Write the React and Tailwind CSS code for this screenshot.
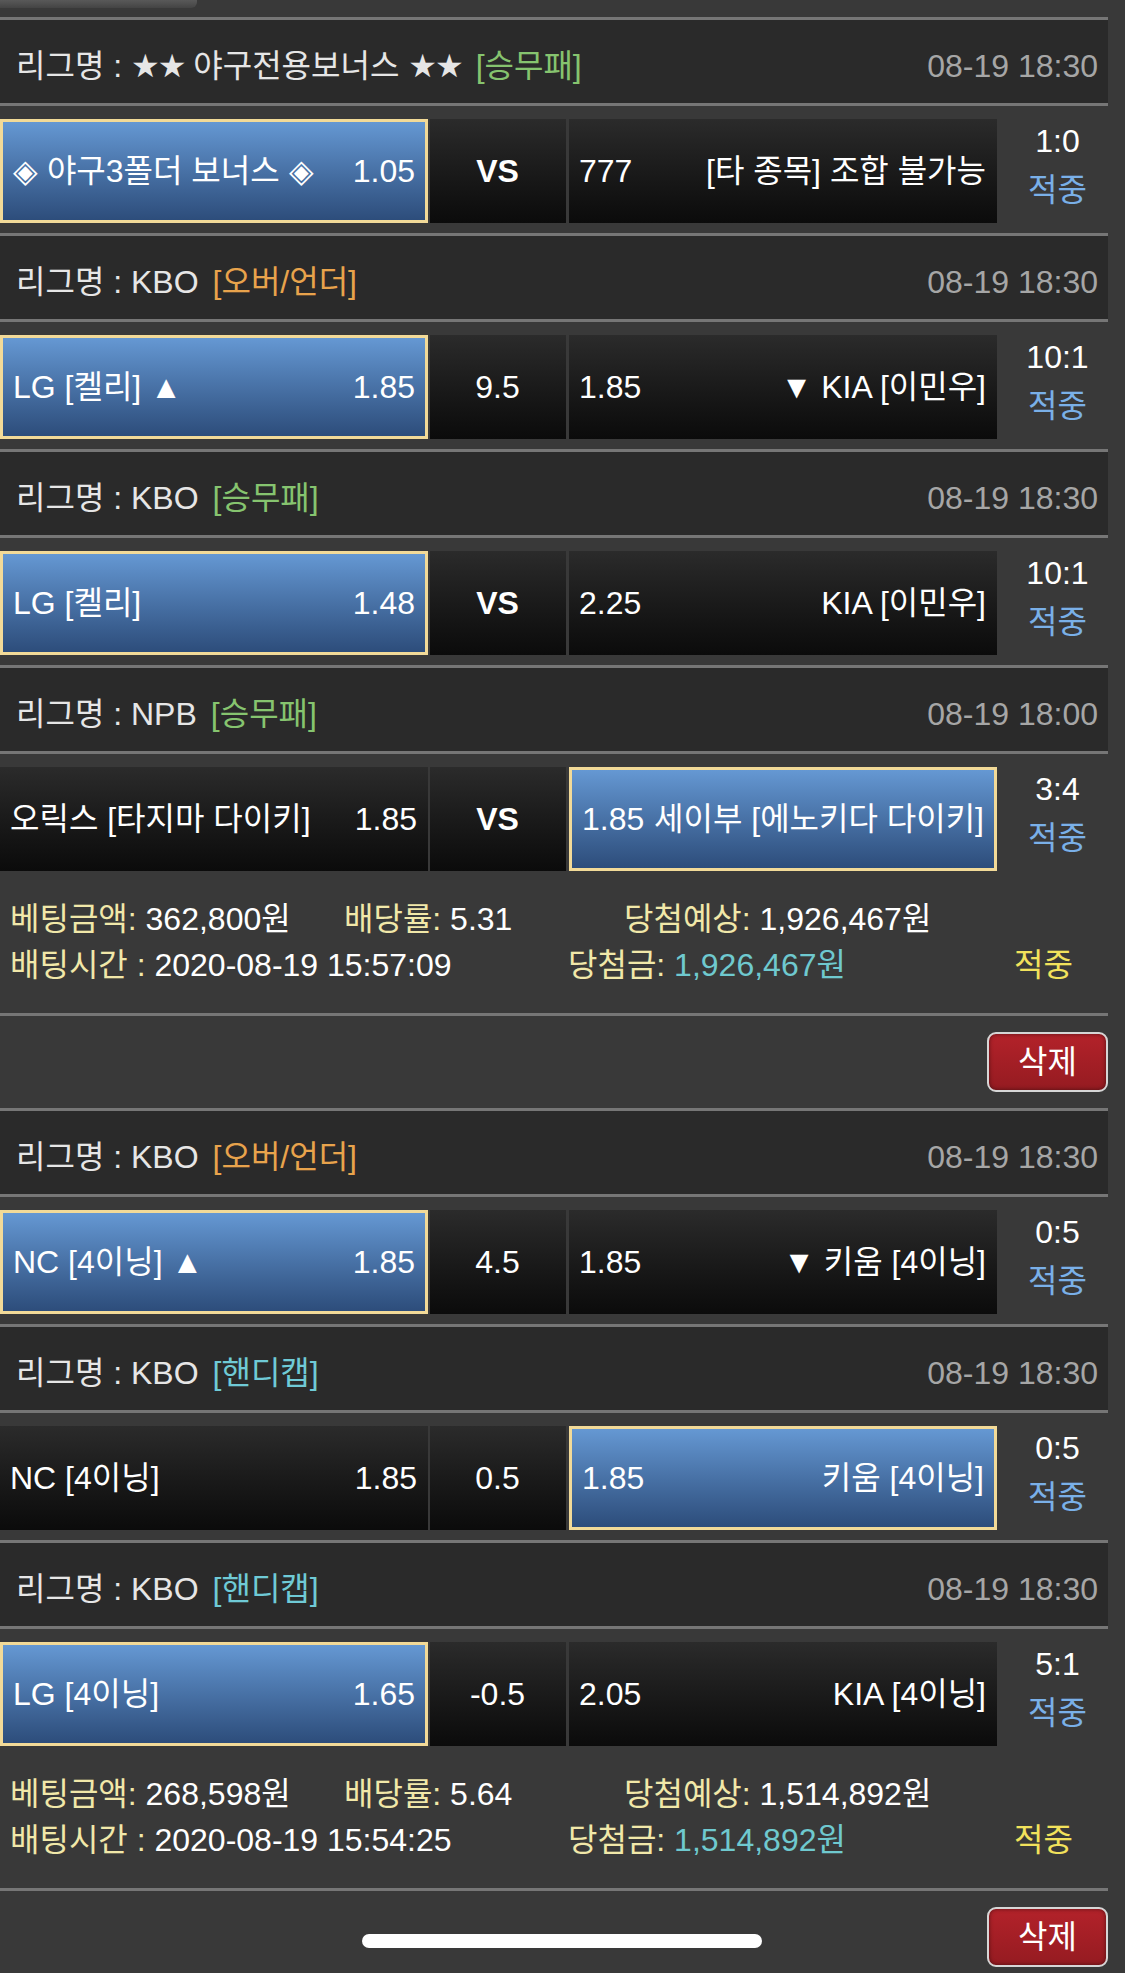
import React from "react";

const tagColor = {
  green: "text-[#86c46f]",
  orange: "text-[#e8a34c]",
  cyan: "text-[#6fcad6]",
};

function Cell({ blue, w, left, right, center, bold, extra = "" }) {
  const base = blue
    ? "bg-gradient-to-b from-[#6598d3] to-[#2d4d7b] border-[3px] border-[#f2da98]"
    : "bg-gradient-to-b from-[#2b2b2b] to-[#0b0b0b]";
  return (
    <div className={`${w} h-[104px] flex items-center ${base} ${extra} ${center ? "justify-center" : "justify-between"} ${blue ? "pl-[10px] pr-[10px]" : "pl-[10px] pr-[11px]"}`}>
      {center ? (
        <span className={bold ? "font-bold" : ""}>{center}</span>
      ) : (
        <>
          <span className="whitespace-pre">{left}</span>
          <span className="whitespace-pre">{right}</span>
        </>
      )}
    </div>
  );
}

const Stars = () => <span className="font-['DejaVu_Sans',sans-serif] text-[32px] tracking-[-2px]">★★</span>;

function Block({ league, tag, tagC, time, L, M, R, score, lb, rb }) {
  return (
    <>
      <div className="h-[86px] border-t-[3px] border-[#767676] bg-[#2a2a2a] flex items-center justify-between pl-[16px] pr-[10px] pt-[8px]">
        <div className="text-[#e6e6e6] whitespace-pre">
          리그명 : {league === "BONUS" ? (<><Stars /> 야구전용보너스 <Stars /></>) : league}
          <span className={`ml-[14px] ${tagColor[tagC]}`}>{tag}</span>
        </div>
        <div className="text-[#a6a6a6]">{time}</div>
      </div>
      <div className="h-[130px] border-t-[3px] border-[#767676] pt-[13px] flex text-white">
        <Cell blue={lb} w="w-[428px]" left={L[0]} right={L[1]} />
        <Cell w="w-[136px]" extra="ml-[2px]" center={M} bold={M === "VS"} />
        <Cell blue={rb} w="w-[428px]" extra="ml-[3px]" left={R[0]} right={R[1]} />
        <div className="w-[111px] pl-[10px] flex flex-col items-center gap-[9px] mt-[2px] leading-[40px]">
          <span className="text-white">{score}</span>
          <span className="text-[#7ab0e8]">적중</span>
        </div>
      </div>
    </>
  );
}

function Summary({ amount, odds, expect, time, win }) {
  return (
    <div className="h-[132px] pt-[15px] leading-[46px] whitespace-pre">
      <div className="flex pl-[10px]">
        <span className="w-[334px]">
          <span className="text-[#f1e8a9]">베팅금액: </span>
          <span className="text-white">{amount}</span>
        </span>
        <span className="w-[280px]">
          <span className="text-[#f1e8a9]">배당률: </span>
          <span className="text-white">{odds}</span>
        </span>
        <span>
          <span className="text-[#f1e8a9]">당첨예상: </span>
          <span className="text-white">{expect}</span>
        </span>
      </div>
      <div className="flex pl-[10px]">
        <span className="w-[558px]">
          <span className="text-[#f1e8a9]">배팅시간 : </span>
          <span className="text-white">{time}</span>
        </span>
        <span className="w-[446px]">
          <span className="text-[#f1e8a9]">당첨금: </span>
          <span className="text-[#6fc9cf]">{win}</span>
        </span>
        <span className="text-[#f2e25c]">적중</span>
      </div>
    </div>
  );
}

function DeleteBtn({ h }) {
  return (
    <div className={`${h} border-t-[3px] border-[#767676] flex justify-end items-start pt-[16px]`}>
      <div className="w-[121px] h-[60px] rounded-[9px] border-[2px] border-[#d6d6d6] bg-gradient-to-b from-[#b3222a] to-[#951b21] flex items-center justify-center text-white shadow-[inset_0_0_4px_rgba(0,0,0,0.5)]">
        삭제
      </div>
    </div>
  );
}

const t1 = [
  { league: "BONUS", tag: "[승무패]", tagC: "green", time: "08-19 18:30", L: ["◈ 야구3폴더 보너스 ◈", "1.05"], M: "VS", R: ["777", "[타 종목] 조합 불가능"], score: "1:0", lb: true },
  { league: "KBO", tag: "[오버/언더]", tagC: "orange", time: "08-19 18:30", L: ["LG [켈리] ▲", "1.85"], M: "9.5", R: ["1.85", "▼ KIA [이민우]"], score: "10:1", lb: true },
  { league: "KBO", tag: "[승무패]", tagC: "green", time: "08-19 18:30", L: ["LG [켈리]", "1.48"], M: "VS", R: ["2.25", "KIA [이민우]"], score: "10:1", lb: true },
  { league: "NPB", tag: "[승무패]", tagC: "green", time: "08-19 18:00", L: ["오릭스 [타지마 다이키]", "1.85"], M: "VS", R: ["1.85", "세이부 [에노키다 다이키]"], score: "3:4", rb: true },
];

const t2 = [
  { league: "KBO", tag: "[오버/언더]", tagC: "orange", time: "08-19 18:30", L: ["NC [4이닝] ▲", "1.85"], M: "4.5", R: ["1.85", "▼ 키움 [4이닝]"], score: "0:5", lb: true },
  { league: "KBO", tag: "[핸디캡]", tagC: "cyan", time: "08-19 18:30", L: ["NC [4이닝]", "1.85"], M: "0.5", R: ["1.85", "키움 [4이닝]"], score: "0:5", rb: true },
  { league: "KBO", tag: "[핸디캡]", tagC: "cyan", time: "08-19 18:30", L: ["LG [4이닝]", "1.65"], M: "-0.5", R: ["2.05", "KIA [4이닝]"], score: "5:1", lb: true },
];

export default function App() {
  return (
    <div className="relative w-[1125px] h-[1973px] overflow-hidden bg-[#393939] text-[32px] leading-[40px] font-['Liberation_Sans','Noto_Sans_CJK_KR',sans-serif]">
      <div className="h-[17px]">
        <div className="h-[8px] w-[197px] rounded-br-[6px] bg-gradient-to-b from-[#595959] to-[#444444]" />
      </div>
      <div className="w-[1108px]">
        {t1.map((b, i) => (
          <Block key={i} {...b} />
        ))}
        <Summary amount="362,800원" odds="5.31" expect="1,926,467원" time="2020-08-19 15:57:09" win="1,926,467원" />
        <DeleteBtn h="h-[95px]" />
        {t2.map((b, i) => (
          <Block key={i} {...b} />
        ))}
        <Summary amount="268,598원" odds="5.64" expect="1,514,892원" time="2020-08-19 15:54:25" win="1,514,892원" />
        <DeleteBtn h="h-[85px]" />
      </div>
      <div className="absolute left-[362px] top-[1934px] w-[400px] h-[14px] rounded-full bg-white" />
    </div>
  );
}
